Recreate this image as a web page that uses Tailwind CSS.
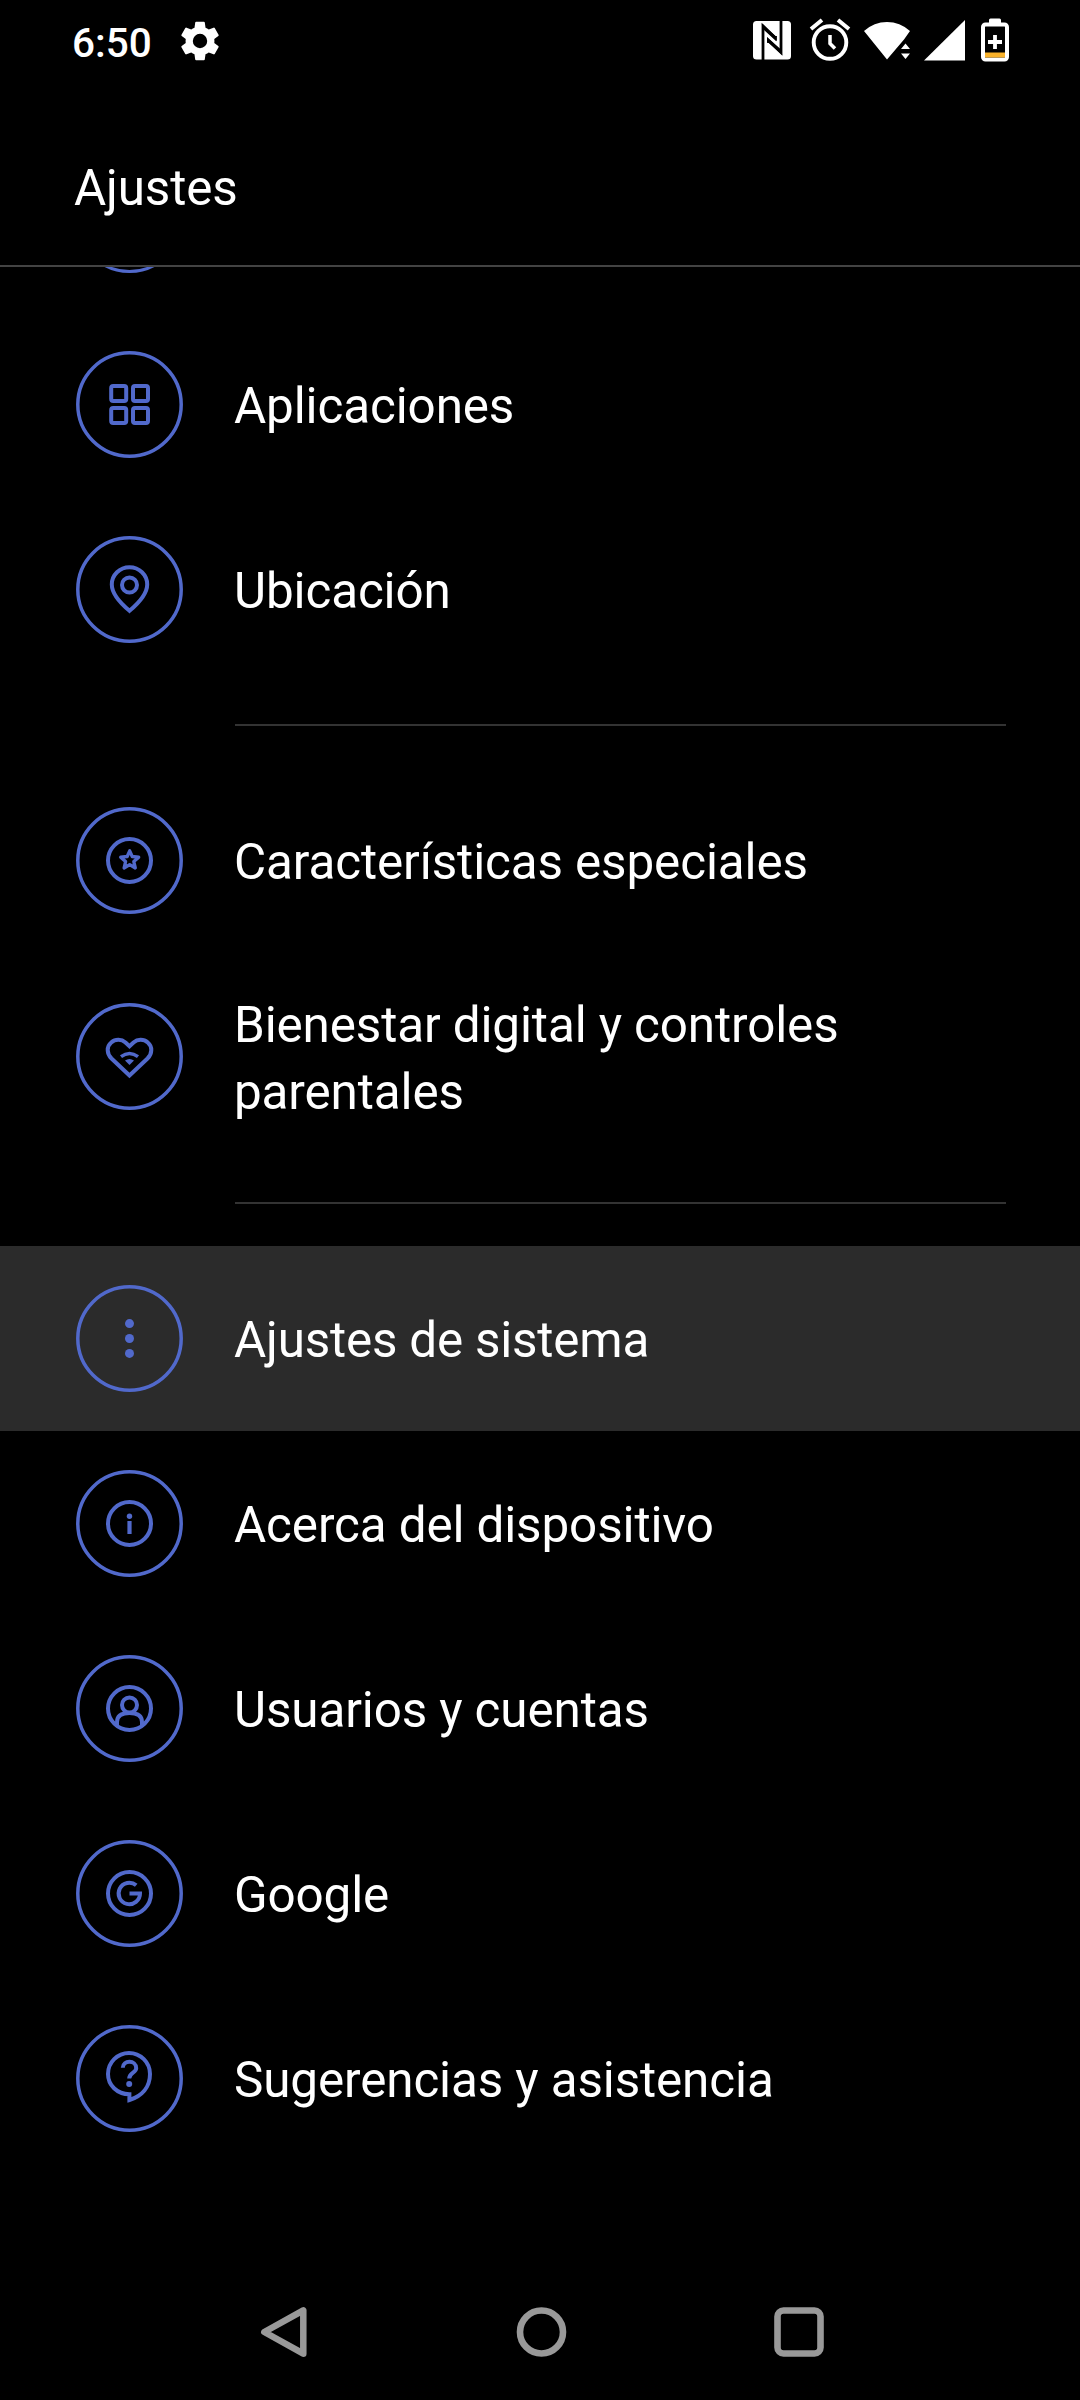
<!DOCTYPE html>
<html lang="es">
<head>
<meta charset="utf-8">
<title>Ajustes</title>
<script src="https://cdn.jsdelivr.net/npm/@tailwindcss/browser@4"></script>
</head>
<body class="bg-black">
<div class="w-[1080px] h-[2400px] bg-black text-white font-[Roboto,sans-serif] flex flex-col overflow-hidden">

  <header class="h-[267px] shrink-0 border-b-2 border-[#434343] flex flex-col">
    <div class="h-20 pl-[72px] pr-[70px] flex items-center justify-between">
      <div class="flex items-center gap-[20px] pt-[4px]">
        <span class="pt-[2px] text-[40.5px] leading-none font-medium w-[84px] whitespace-nowrap">6:50</span>
        <svg class="size-[48px] -mt-[3px]" viewBox="0 0 24 24" fill="currentColor"><path d="M19.14 12.94c.04-.3.06-.61.06-.94 0-.32-.02-.64-.07-.94l2.03-1.58a.49.49 0 0 0 .12-.61l-1.92-3.32a.488.488 0 0 0-.59-.22l-2.39.96c-.5-.38-1.03-.7-1.62-.94l-.36-2.54a.484.484 0 0 0-.48-.41h-3.84c-.24 0-.43.17-.47.41l-.36 2.54c-.59.24-1.13.57-1.62.94l-2.39-.96c-.22-.08-.47 0-.59.22L2.74 8.87c-.12.21-.08.47.12.61l2.03 1.58c-.05.3-.09.63-.09.94s.02.64.07.94l-2.03 1.58a.49.49 0 0 0-.12.61l1.92 3.32c.12.22.37.29.59.22l2.39-.96c.5.38 1.03.7 1.62.94l.36 2.54c.05.24.24.41.48.41h3.84c.24 0 .44-.17.47-.41l.36-2.54c.59-.24 1.13-.56 1.62-.94l2.39.96c.22.08.47 0 .59-.22l1.92-3.32c.12-.22.07-.47-.12-.61l-2.01-1.58zM12 15.6A3.6 3.6 0 1 1 12 8.4a3.6 3.6 0 0 1 0 7.2z"/></svg>
      </div>
      <svg class="w-[258px] h-[80px]" viewBox="752 0 258 80">
        <rect x="753" y="21" width="38" height="38.500" rx="3.500" fill="#fff"/>
        <path d="M763 60V26L775.500 38V36M781 20V52.500L768.500 40.500V43" fill="none" stroke="#000" stroke-width="2.800"/>
        <path d="M761.700 24L776 36.500V41L764 30zM782.300 55L767 41.500V37L781 49.500z" fill="#000"/>
        <g fill="none" stroke="#fff">
          <circle cx="830" cy="42.500" r="16.300" stroke-width="3.900"/>
          <path d="M830 35V43.500L835 48.500" stroke-width="3.500"/>
          <path d="M811 29L822 20M849 29L838 20" stroke-width="4"/>
        </g>
        <path d="M887 59.500L864 31Q874 22 887 22T910 31L904 39.500zM901 49H910L905.500 43.500zM901 53.500H910L905.500 59z" fill="#fff"/>
        <path d="M924 60.500L965 20V60.500z" fill="#fff"/>
        <path d="M989 24.500V20Q989 18.500 990.500 18.500H999.500Q1001 18.500 1001 20V24.500z" fill="#fff"/>
        <rect x="983" y="24.500" width="24" height="35" rx="2.500" fill="none" stroke="#fff" stroke-width="4"/>
        <path d="M985 52.500H1005V57.500H985z" fill="#f9b22b"/>
        <path d="M988 42H1002M995 35V49" stroke="#fff" stroke-width="3.800"/>
      </svg>
    </div>
    <h1 class="mt-[75px] pl-[74px] text-[49.4px] tracking-[-0.15px] leading-[67px]">Ajustes</h1>
  </header>

  <main class="flex flex-col text-[49.4px] tracking-[-0.12px] leading-[67px]">
    <div class="h-[45px] overflow-hidden flex flex-col justify-end">
      <div class="h-[185px] shrink-0 flex items-center pl-[76px]">
        <div class="size-[107px] rounded-full border-[3.5px] border-[#5169cb]"></div>
      </div>
    </div>

    <div class="h-[185px] flex items-center pl-[76px] gap-[51px]">
      <svg class="size-[107px] shrink-0" viewBox="0 0 107 107" fill="none" stroke="#5169cb" stroke-width="4"><circle cx="53.500" cy="53.500" r="51.700" stroke-width="3.500"/>
        <rect x="35.200" y="35" width="15" height="15" rx="2"/><rect x="57" y="35" width="15" height="15" rx="2"/><rect x="35.200" y="56.900" width="15" height="15" rx="2"/><rect x="57" y="56.900" width="15" height="15" rx="2"/>
      </svg>
      <span class="pt-1">Aplicaciones</span>
    </div>
    <div class="h-[185px] flex items-center pl-[76px] gap-[51px]">
      <svg class="size-[107px] shrink-0" viewBox="0 0 107 107" fill="none" stroke="#5169cb" stroke-width="4"><circle cx="53.500" cy="53.500" r="51.700" stroke-width="3.500"/>
        <path d="M53.500 74.800C46 68.500 35.800 58.500 35.800 48.500A17.700 17.300 0 0 1 71.200 48.500C71.200 58.500 61 68.500 53.500 74.800z"/><circle cx="53.500" cy="49" r="7.500"/>
      </svg>
      <span class="pt-1">Ubicación</span>
    </div>

    <div class="h-[2px] my-[42px] ml-[235px] mr-[74px] bg-[#333]"></div>

    <div class="h-[185px] flex items-center pl-[76px] gap-[51px]">
      <svg class="size-[107px] shrink-0" viewBox="0 0 107 107" fill="none" stroke="#5169cb" stroke-width="4"><circle cx="53.500" cy="53.500" r="51.700" stroke-width="3.500"/>
        <circle cx="53.500" cy="53.500" r="21.500"/><path d="M53.700 43.800L56.200 49.500L62.700 50.200L57.800 54.600L59.300 61L53.700 57.600L48.100 61L49.600 54.600L44.700 50.200L51.200 49.500z" stroke-width="3.300" stroke-linejoin="round"/>
      </svg>
      <span class="pt-1">Características especiales</span>
    </div>
    <div class="h-[207px] flex items-center pl-[76px] gap-[51px]">
      <svg class="size-[107px] shrink-0" viewBox="0 0 107 107" fill="none" stroke="#5169cb" stroke-width="4"><circle cx="53.500" cy="53.500" r="51.700" stroke-width="3.500"/>
        <path d="M53.500 72.500L35.500 55.500C30.500 50.500 30.500 43.500 35.200 39.500C39.500 35.600 45.500 36 49.500 39.500L53.500 43.300L57.500 39.500C61.500 36 67.500 35.600 71.800 39.500C76.500 43.500 76.500 50.500 71.500 55.500z"/>
        <path d="M45 53.600Q53.500 47.300 62 53.600" stroke-width="3.500"/><path d="M49 57.500Q53.500 54.300 58 57.500L53.500 62z" fill="#5169cb" stroke="none"/>
      </svg>
      <span class="pt-1 w-[680px]">Bienestar digital y controles parentales</span>
    </div>

    <div class="h-[2px] my-[42px] ml-[235px] mr-[74px] bg-[#333]"></div>

    <div class="h-[185px] flex items-center pl-[76px] gap-[51px] bg-[#2b2b2b]">
      <svg class="size-[107px] shrink-0" viewBox="0 0 107 107" fill="none" stroke="#5169cb" stroke-width="4"><circle cx="53.500" cy="53.500" r="51.700" stroke-width="3.500"/>
        <g fill="#5169cb" stroke="none"><circle cx="53.500" cy="38.600" r="4.500"/><circle cx="53.500" cy="53.500" r="4.500"/><circle cx="53.500" cy="68.400" r="4.500"/></g>
      </svg>
      <span class="pt-1 tracking-[-0.2px]">Ajustes de sistema</span>
    </div>
    <div class="h-[185px] flex items-center pl-[76px] gap-[51px]">
      <svg class="size-[107px] shrink-0" viewBox="0 0 107 107" fill="none" stroke="#5169cb" stroke-width="4"><circle cx="53.500" cy="53.500" r="51.700" stroke-width="3.500"/>
        <circle cx="53.500" cy="53.500" r="21.500"/><circle cx="53.500" cy="46.200" r="2.700" fill="#5169cb" stroke="none"/><path d="M53.500 51V64" stroke-width="4.200"/>
      </svg>
      <span class="pt-1">Acerca del dispositivo</span>
    </div>
    <div class="h-[185px] flex items-center pl-[76px] gap-[51px]">
      <svg class="size-[107px] shrink-0" viewBox="0 0 107 107" fill="none" stroke="#5169cb" stroke-width="4"><circle cx="53.500" cy="53.500" r="51.700" stroke-width="3.500"/>
        <circle cx="53.500" cy="53.500" r="21.500"/><circle cx="53.500" cy="50" r="7.500"/><path d="M41 70V67Q41 58 53.500 58T66 67V70"/>
      </svg>
      <span class="pt-1">Usuarios y cuentas</span>
    </div>
    <div class="h-[185px] flex items-center pl-[76px] gap-[51px]">
      <svg class="size-[107px] shrink-0" viewBox="0 0 107 107" fill="none" stroke="#5169cb" stroke-width="4"><circle cx="53.500" cy="53.500" r="51.700" stroke-width="3.500"/>
        <circle cx="53.500" cy="53.500" r="21.500"/><path d="M60.200 45.300A10.700 10.700 0 1 0 64 53.500H53.500"/>
      </svg>
      <span class="pt-1">Google</span>
    </div>
    <div class="h-[185px] flex items-center pl-[76px] gap-[51px]">
      <svg class="size-[107px] shrink-0" viewBox="0 0 107 107" fill="none" stroke="#5169cb" stroke-width="4"><circle cx="53.500" cy="53.500" r="51.700" stroke-width="3.500"/>
        <path d="M53.400 75V69.200C41 69.200 32 60 32 49A21 21 0 0 1 74 49C74 62 66 71 53.400 75z"/><path d="M46.800 42.800C46.800 34.800 60.200 34.800 60.200 43.200C60.200 47.800 53.200 47.500 53.200 53.500"/><circle cx="53.200" cy="59" r="3" fill="#5169cb" stroke="none"/>
      </svg>
      <span class="pt-1">Sugerencias y asistencia</span>
    </div>
  </main>

  <nav class="mt-[93px] flex justify-between items-center h-[136px] pl-[258px] pr-[255px] text-[#999]">
    <svg class="size-[52px]" viewBox="0 0 52 52" fill="none" stroke="currentColor" stroke-width="6.500" stroke-linejoin="round"><path d="M6.300 26L45.300 4.300V47.700z"/></svg>
    <svg class="size-[52px]" viewBox="0 0 52 52" fill="none" stroke="currentColor" stroke-width="6.600"><circle cx="25.500" cy="26" r="21.500"/></svg>
    <svg class="size-[52px]" viewBox="0 0 52 52" fill="none" stroke="currentColor" stroke-width="6.600"><rect x="4.500" y="4.500" width="43" height="43" rx="6"/></svg>
  </nav>
</div>
</body>
</html>
